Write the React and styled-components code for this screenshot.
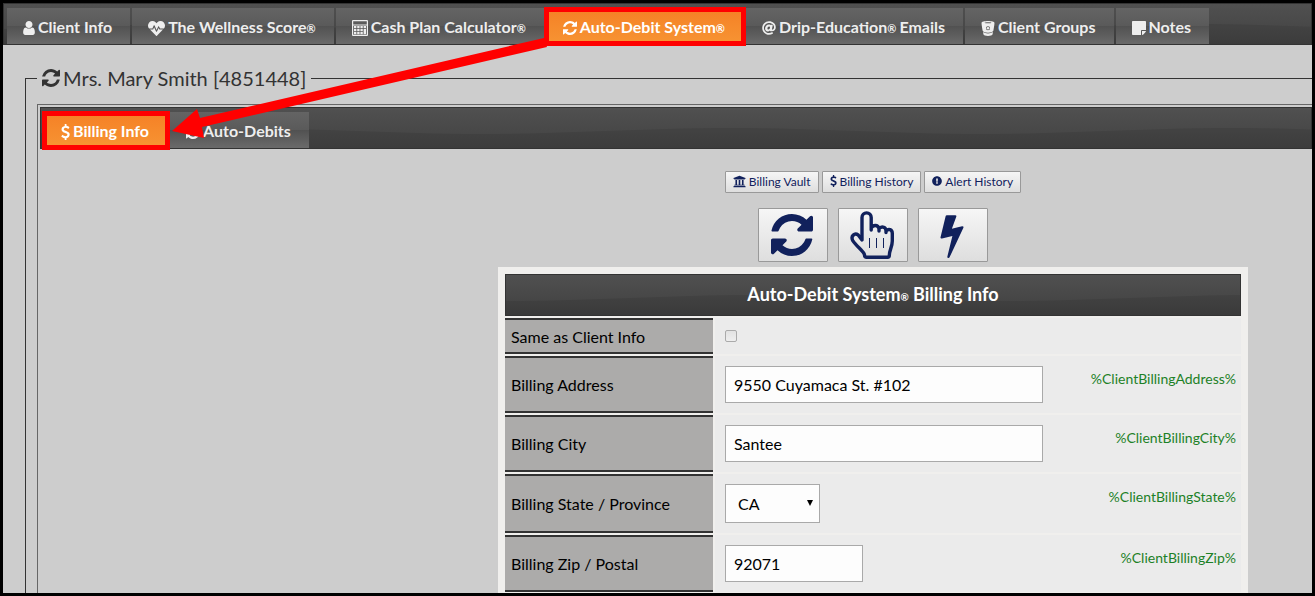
import React from 'react';
import styled, { createGlobalStyle, css } from 'styled-components';
import { FaHeartbeat, FaAt, FaUniversity, FaExclamationCircle } from 'react-icons/fa';

const GlobalStyle = createGlobalStyle`
  *, *::before, *::after {
    box-sizing: border-box;
  }
  body {
    margin: 0;
    background: #000;
    font-family: Lato, "Liberation Sans", sans-serif;
  }
`;

// Wave shading shared by the dark bars
const wave = `url("data:image/svg+xml,%3Csvg xmlns='http://www.w3.org/2000/svg' width='500' height='42' preserveAspectRatio='none'%3E%3Cpath d='M0 26C90 26 160 20 250 20S410 26 500 26V42H0Z' fill='%23000' fill-opacity='.09'/%3E%3C/svg%3E")`;

// Icons
const RefreshIcon = () => (
  <svg viewBox="0 128 1536 1536" fill="currentColor" aria-hidden="true">
    <path d="M1511 1056q0 5-1 7-64 268-268 434.5t-478 166.5q-146 0-282.5-55t-243.5-157l-129 129q-19 19-45 19t-45-19-19-45v-448q0-26 19-45t45-19h448q26 0 45 19t19 45-19 45l-137 137q71 66 161 102t187 36q134 0 250-65t186-179q11-17 53-117 8-23 30-23h192q13 0 22.5 9.5t9.5 22.5zm25-800v448q0 26-19 45t-45 19h-448q-26 0-45-19t-19-45 19-45l138-138q-148-137-349-137-134 0-250 65t-186 179q-11 17-53 117-8 23-30 23h-199q-13 0-22.5-9.5t-9.5-22.5v-7q65-268 270-434.5t480-166.5q146 0 284 55.5t245 156.5l130-129q19-19 45-19t45 19 19 45z" />
  </svg>
);

const UserIcon = () => (
  <svg viewBox="256 128 1280 1536" fill="currentColor" aria-hidden="true">
    <path d="M1536 1399q0 109-62.5 187t-150.5 78h-854q-88 0-150.5-78t-62.5-187q0-85 8.5-160.5t31.5-152 58.5-131 94-89 134.5-34.5q131 128 313 128t313-128q76 0 134.5 34.5t94 89 58.5 131 31.5 152 8.5 160.5zm-256-887q0 159-112.5 271.5t-271.5 112.5-271.5-112.5-112.5-271.5 112.5-271.5 271.5-112.5 271.5 112.5 112.5 271.5z" />
  </svg>
);

const DollarIcon = () => (
  <svg viewBox="410 0 970 1792" fill="currentColor" aria-hidden="true">
    <path d="M1362 1185q0 153-99.5 263.5t-258.5 136.5v175q0 14-9 23t-23 9h-135q-13 0-22.5-9.5t-9.5-22.5v-175q-66-9-127.5-31t-101.5-44.5-74-48-46.5-37.5-17.5-18q-17-21-2-41l103-135q7-10 23-12 15-2 24 9l2 2q113 99 243 125 37 8 74 8 81 0 142.5-43t61.5-122q0-28-15-53t-33.5-42-58.5-37.5-66-32-80-32.5q-39-16-61.5-25t-61.5-26.5-62.5-31-56.5-35.5-53.5-42.5-43.5-49-35.5-58-21-66.5-8.5-78q0-138 98-242t255-134v-180q0-13 9.5-22.5t22.5-9.5h135q14 0 23 9t9 23v176q57 6 110.5 23t87 33.5 63.5 37.5 39 29 15 14q17 18 5 38l-81 146q-8 15-23 16-14 3-27-7-3-3-14.5-12t-39-26.5-58.5-32-74.5-26-85.5-11.5q-95 0-155 43t-60 111q0 26 8.5 48t29.5 41.5 39.5 33 56 31 60.5 27 70 27.5q53 20 81 31.5t76 35 75.5 42.5 62 50 53 63.5 31.5 76.5 13 94z" />
  </svg>
);

const BoltIcon = () => (
  <svg viewBox="448 0 896 1792" fill="currentColor" aria-hidden="true">
    <path d="M1333 566q18 20 7 44l-540 1157q-13 25-42 25-4 0-14-2-17-5-25.5-19t-4.5-30l197-808-406 101q-4 1-12 1-18 0-31-11-18-15-13-39l201-825q4-14 16-23t28-9h328q19 0 32 12.5t13 29.5q0 8-5 18l-171 463 396-98q8-2 12-2 19 0 34 15z" />
  </svg>
);

const HandIcon = () => (
  <svg viewBox="0 0 44 48" fill="none" stroke="currentColor" strokeLinejoin="round" strokeLinecap="round" aria-hidden="true">
    <path
      strokeWidth="3.4"
      d="M12 29V6.500a4.600 4.600 0 0 1 9.200 0V19V17C23 13.600 28 13.400 29 17.500V20V17.800C31 15 35.600 15.400 36 19.500V21.500V20C38.600 17.200 42.300 18.400 42.300 22.500V30C42.300 36 39.300 39 39.300 44.500Q39.300 46.200 37.500 46.200H16.500Q14.700 46.200 14.500 44C14.200 40.500 6.500 35.500 2.800 29.600C.4 25 4.600 21.400 8.400 24.200Z"
    />
    <path strokeWidth="1" strokeLinecap="butt" d="M19.500 27v10M26.500 27v10M33.500 27v10" />
  </svg>
);

const CalculatorIcon = () => (
  <svg viewBox="0 0 16 16" fill="currentColor" aria-hidden="true">
    <path
      fillRule="evenodd"
      d="M1 0h14a1 1 0 0 1 1 1v14a1 1 0 0 1-1 1H1a1 1 0 0 1-1-1V1a1 1 0 0 1 1-1zM1.200 1.200v3.200h13.600V1.200zM1.200 5.400v9.400h13.600V5.400z"
    />
    <path d="M2 6h2.400v2.200H2zM5.200 6h2.400v2.200H5.200zM8.400 6h2.400v2.200H8.400zM11.600 6H14v2.200h-2.400zM2 9h2.400v2.200H2zM5.200 9h2.400v2.200H5.200zM8.400 9h2.400v2.200H8.400zM2 12h2.400v2.200H2zM5.200 12h2.400v2.200H5.200zM8.400 12h2.400v2.200H8.400zM11.600 9H14v5.200h-2.400z" />
  </svg>
);

const BucketIcon = () => (
  <svg viewBox="0 0 14 16" fill="currentColor" aria-hidden="true">
    <path
      fillRule="evenodd"
      d="M7 0c3.800 0 6.900.8 6.900 2 0 1.700-.8 6-1.200 8.300C12.300 11.500 9.700 12.400 7 12.400S1.700 11.500 1.300 10.300C.9 8 .1 3.700.1 2 .1.800 3.200 0 7 0zM7 1.300c-2 0-3.600.2-3.600.6s1.600.6 3.600.6 3.600-.2 3.600-.6-1.600-.6-3.600-.6zM7 5.500a2.200 2.200 0 1 0 0 4.400 2.200 2.200 0 0 0 0-4.400z"
    />
    <circle cx="7" cy="7.700" r="1.400" />
    <path d="M1.700 11.700c1.200 1 3.100 1.500 5.300 1.500s4.100-.5 5.300-1.500l-.4 2.500C11.500 15.400 9.500 16 7 16s-4.500-.6-4.900-1.800z" />
  </svg>
);

const NoteIcon = () => (
  <svg viewBox="0 0 14 14" fill="currentColor" aria-hidden="true">
    <path d="M.8 0h12.400a.8.800 0 0 1 .8.800V9H9.800a.8.800 0 0 0-.8.800V14H.8a.8.800 0 0 1-.8-.8V.8A.8.800 0 0 1 .8 0z" />
    <path d="M10 10h4c-.1.600-.4 1.200-.8 1.600l-1.600 1.600c-.4.400-1 .7-1.600.8z" />
  </svg>
);

const fields = [
  { id: 'address', label: 'Billing Address', value: '9550 Cuyamaca St. #102', tag: '%ClientBillingAddress%' },
  { id: 'city', label: 'Billing City', value: 'Santee', tag: '%ClientBillingCity%' },
  { id: 'state', label: 'Billing State / Province', value: 'CA', tag: '%ClientBillingState%', select: true },
  { id: 'zip', label: 'Billing Zip / Postal', value: '92071', tag: '%ClientBillingZip%', short: true },
];

export default function App() {
  return (
    <Frame>
      <GlobalStyle />

      {/* Main tabs */}
      <TabBar>
        <Tab href="#client"><Icon $w={12} $h={14}><UserIcon /></Icon>Client Info</Tab>
        <Tab href="#score"><Icon $w={17} $h={17}><FaHeartbeat /></Icon>The Wellness Score<Reg>®</Reg></Tab>
        <Tab href="#plan"><Icon $w={16} $h={16}><CalculatorIcon /></Icon>Cash Plan Calculator<Reg>®</Reg></Tab>
        <Tab href="#debit" $active><Icon $w={14} $h={14}><RefreshIcon /></Icon>Auto-Debit System<Reg>®</Reg></Tab>
        <Tab href="#drip"><Icon $w={14} $h={14}><FaAt /></Icon>Drip-Education<Reg>®</Reg>Emails</Tab>
        <Tab href="#groups"><Icon $w={14} $h={15}><BucketIcon /></Icon>Client Groups</Tab>
        <Tab href="#notes"><Icon $w={14} $h={14}><NoteIcon /></Icon>Notes</Tab>
      </TabBar>

      <ClientBox>
        <ClientName><Icon $w={18} $h={18}><RefreshIcon /></Icon>Mrs. Mary Smith [4851448]</ClientName>
        <InnerBox>
          <TabBar>
            <Tab href="#billing" $active><Icon $w={9} $h={16}><DollarIcon /></Icon>Billing Info</Tab>
            <Tab href="#debits"><Icon $w={14} $h={14}><RefreshIcon /></Icon>Auto-Debits</Tab>
          </TabBar>

          <Content>
            <ButtonRow $gap={3}>
              <SmallButton type="button"><Icon $w={13} $h={13}><FaUniversity /></Icon>Billing Vault</SmallButton>
              <SmallButton type="button"><Icon $w={7} $h={12}><DollarIcon /></Icon>Billing History</SmallButton>
              <SmallButton type="button"><Icon $w={10} $h={10}><FaExclamationCircle /></Icon>Alert History</SmallButton>
            </ButtonRow>
            <ButtonRow $gap={10}>
              <BigButton type="button" aria-label="Recurring debit"><Icon $w={42} $h={42}><RefreshIcon /></Icon></BigButton>
              <BigButton type="button" aria-label="Manual debit"><Icon $w={44} $h={48}><HandIcon /></Icon></BigButton>
              <BigButton type="button" aria-label="Instant debit"><Icon $w={24} $h={46}><BoltIcon /></Icon></BigButton>
            </ButtonRow>

            {/* Billing form */}
            <BillingTable>
              <thead>
                <tr>
                  <TableTitle colSpan={2}>Auto-Debit System<Reg>®</Reg> Billing Info</TableTitle>
                </tr>
              </thead>
              <tbody>
                <tr>
                  <LabelCell $short><label htmlFor="same">Same as Client Info</label></LabelCell>
                  <ValueCell><Checkbox id="same" type="checkbox" /></ValueCell>
                </tr>
                {fields.map((field) => (
                  <tr key={field.id}>
                    <LabelCell><label htmlFor={field.id}>{field.label}</label></LabelCell>
                    <ValueCell>
                      <FieldRow>
                        {field.select ? (
                          <SelectBox>
                            <Select id={field.id} defaultValue={field.value}>
                              <option>CA</option>
                            </Select>
                            <svg viewBox="0 0 6 6" aria-hidden="true"><path d="M0 0h6L3 6z" /></svg>
                          </SelectBox>
                        ) : (
                          <TextInput id={field.id} type="text" defaultValue={field.value} $short={field.short} />
                        )}
                        <Tag>{field.tag}</Tag>
                      </FieldRow>
                    </ValueCell>
                  </tr>
                ))}
              </tbody>
            </BillingTable>
          </Content>
        </InnerBox>
      </ClientBox>

      {/* Arrow from the main tab to its sub tab */}
      <Arrow viewBox="0 0 400 110" aria-hidden="true">
        <path d="M373 2L376 11L31 91L33 102L1 95L26 73L29 82Z" />
      </Arrow>
    </Frame>
  );
}

// Page
const Frame = styled.div`
  position: relative;
  height: 100vh;
  border: 3px solid #000;
  background: #cdcdcd;
  overflow: hidden;
`;

const Arrow = styled.svg`
  position: absolute;
  left: 168px;
  top: 33px;
  width: 400px;
  height: 110px;
  fill: #ff0000;
  pointer-events: none;
`;

const Icon = styled.span`
  display: inline-flex;
  flex: none;
  width: ${(p) => p.$w}px;
  height: ${(p) => p.$h}px;

  svg {
    width: 100%;
    height: 100%;
  }
`;

const Reg = styled.span`
  font-size: 10px;
`;

// Tabs
const TabBar = styled.nav`
  display: flex;
  gap: 2px;
  height: 42px;
  padding: 4px 3px 0;
  border: 1px solid #333;
  background: ${wave} 440px 0 / 500px 42px, linear-gradient(#505050, #424242);
`;

const Tab = styled.a`
  position: relative;
  display: flex;
  align-items: baseline;
  gap: 3px;
  padding: 8px 18px 0 16px;
  color: #eee;
  font-size: 16px;
  line-height: 22px;
  font-weight: bold;
  text-decoration: none;
  white-space: nowrap;
  background: linear-gradient(#646464, #5a5a5a 50%, #515151 50%, #6a6a6a);

  ${Icon} {
    align-self: center;
    margin-bottom: 4px;
  }

  ${Reg} {
    margin-left: -3px;
    font-size: 11px;
  }

  ${(p) => p.$active && css`
    padding: 8px 19px 0 17px;
    color: #fff;
    background: linear-gradient(#f58025, #f79433);

    &::after {
      content: '';
      position: absolute;
      inset: -1px -2px -2px;
      border: 5px solid #ff0000;
    }
  `}
`;

// Client section
const ClientBox = styled.fieldset`
  min-width: 0;
  margin: 21px 0 0 22px;
  padding: 14px 0 0 11px;
  border: solid #333;
  border-width: 1px 0 0 1px;
`;

const ClientName = styled.legend`
  display: flex;
  align-items: center;
  gap: 3px;
  padding: 0 5px;
  color: #333;
  font-size: 20px;
  line-height: 24px;
`;

const InnerBox = styled.section`
  padding: 2px 0 0 2px;
  border: solid #666;
  border-width: 1px 0 0 1px;
`;

const Content = styled.main`
  width: 750px;
  max-width: 100%;
  margin: 22px 64px 0 auto;
`;

// Buttons
const ButtonRow = styled.div`
  display: flex;
  justify-content: center;
  gap: ${(p) => p.$gap}px;
  margin-bottom: ${(p) => (p.$gap > 3 ? 5 : 15)}px;
`;

const buttonLook = css`
  display: flex;
  align-items: center;
  justify-content: center;
  border: 1px solid #999;
  border-radius: 1px;
  background: linear-gradient(#f6f6f6, #dedede);
  color: #11215c;
  font-family: inherit;
  cursor: pointer;
`;

const SmallButton = styled.button`
  ${buttonLook}
  gap: 3px;
  height: 22px;
  padding: 0 7px 2px;
  font-size: 12px;
`;

const BigButton = styled.button`
  ${buttonLook}
  width: 70px;
  height: 54px;
  padding: 0 2px 0 0;
`;

// Form table
const BillingTable = styled.table`
  width: 100%;
  padding: 5px;
  border-spacing: 2px;
  background: #f0efed;
`;

const TableTitle = styled.th`
  height: 42px;
  padding: 0 0 2px;
  border: 1px solid #333;
  background: ${wave} 0 0 / 500px 42px, linear-gradient(#505050, #404040);
  color: #fff;
  font-size: 18px;
`;

const LabelCell = styled.th`
  width: 208px;
  height: ${(p) => (p.$short ? 36 : 57)}px;
  padding: 0 6px;
  border: solid #333;
  border-width: 2px 0;
  background: #acabaa;
  color: #000;
  font-size: 16px;
  font-weight: normal;
  text-align: left;
`;

const ValueCell = styled.td`
  padding: 0 5px 0 10px;
  background: #ebebeb;
`;

const FieldRow = styled.div`
  display: flex;
  align-items: flex-start;
  justify-content: space-between;
  padding: 10px 0;
`;

const fieldLook = css`
  border: 1px solid #a9a9a9;
  border-radius: 0;
  background: #fdfdfd;
  color: #000;
  font-family: inherit;
  font-size: 16px;
`;

const TextInput = styled.input`
  ${fieldLook}
  width: ${(p) => (p.$short ? 138 : 318)}px;
  height: 37px;
  padding: 0 8px;
`;

const SelectBox = styled.span`
  position: relative;

  svg {
    position: absolute;
    top: 16px;
    right: 7px;
    width: 6px;
    height: 6px;
    pointer-events: none;
  }
`;

const Select = styled.select`
  ${fieldLook}
  display: block;
  appearance: none;
  width: 95px;
  height: 39px;
  padding: 0 12px;
`;

const Checkbox = styled.input`
  appearance: none;
  display: block;
  width: 12px;
  height: 12px;
  margin: 0;
  border: 1px solid #aaa;
  border-radius: 2px;
  background: linear-gradient(#e2e2e2, #eee);
`;

const Tag = styled.span`
  padding-top: 4px;
  color: #1d8127;
  font-size: 14px;
  line-height: 17px;
`;
